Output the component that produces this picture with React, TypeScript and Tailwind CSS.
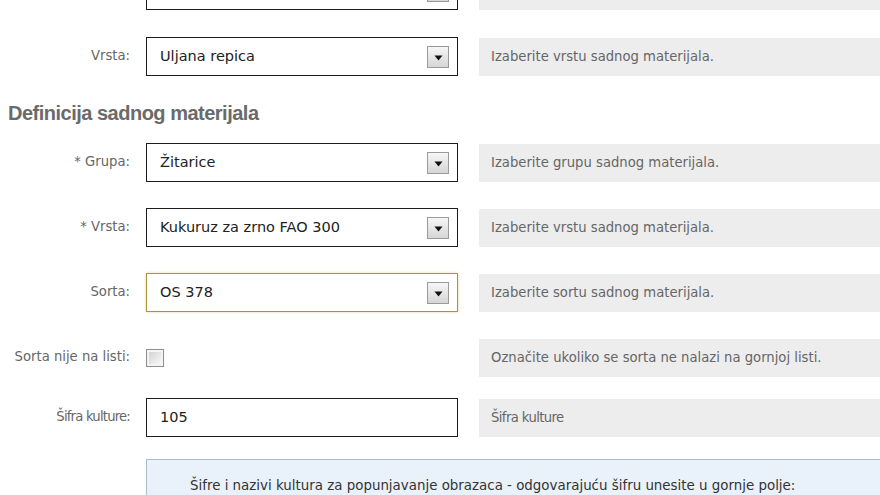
const body = { fontFamily: '"DejaVu Sans", Verdana, sans-serif' };

function Arrow() {
  return (
    <span className="flex h-[22px] w-[22px] items-center justify-center border border-[#9a9a9a] bg-gradient-to-b from-[#f6f6f6] to-[#d6d6d6]">
      <svg width="9" height="6" viewBox="0 0 9 6" className="mt-[2px]">
        <path d="M0.5 0.5 H8.5 L4.5 5.5 Z" fill="#111" />
      </svg>
    </span>
  );
}

function Select({ value, focus }: { value: string; focus?: boolean }) {
  return (
    <div
      className={
        "flex h-[39px] w-[312px] items-center justify-between pl-[13px] pr-[8px] bg-white text-[14.5px] text-[#222] border " +
        (focus ? "border-[#a8973a] shadow-[0_0_3px_#e8dc9a]" : "border-[#1c1c1c]")
      }
    >
      <span className="mt-[1px]">{value}</span>
      <Arrow />
    </div>
  );
}

function Help({ text, tight }: { text: string; tight?: boolean }) {
  return (
    <div
      className={
        "ml-[21px] flex h-[38px] flex-1 items-center bg-[#ededed] pl-[12px] text-[13.2px] text-[#666] " +
        (tight ? "tracking-[-0.6px]" : "")
      }
    >
      {text}
    </div>
  );
}

function Row({
  label,
  children,
  help,
  className,
  tight,
}: {
  label: string;
  children: React.ReactNode;
  help: string;
  className?: string;
  tight?: boolean;
}) {
  return (
    <div className={"flex items-center " + (className ?? "")}>
      <div
        className={
          "w-[130px] shrink-0 text-right text-[13.2px] text-[#666] mb-[2px] " +
          (tight ? "tracking-[-0.8px]" : "")
        }
      >
        {label}
      </div>
      <div className="ml-[16px] shrink-0">{children}</div>
      <Help text={help} tight={tight} />
    </div>
  );
}

export default function App() {
  return (
    <div className="h-[495px] w-[880px] overflow-hidden bg-white" style={body}>
      <div className="-mt-[29px] flex flex-col">
        <Row label="Grupa:" help="Izaberite grupu sadnog materijala.">
          <Select value="Uljarice i proteinsko bilje" />
        </Row>
        <Row label="Vrsta:" help="Izaberite vrstu sadnog materijala." className="mt-[27px]">
          <Select value="Uljana repica" />
        </Row>

        <h2
          className="mt-[25px] ml-[8px] text-[20px] font-bold leading-[24px] tracking-[-0.5px] text-[#6a6a6a]"
          style={{ fontFamily: '"Liberation Sans", Arial, sans-serif' }}
        >
          Definicija sadnog materijala
        </h2>

        <Row label="* Grupa:" help="Izaberite grupu sadnog materijala." className="mt-[18px]">
          <Select value="Žitarice" />
        </Row>
        <Row label="* Vrsta:" help="Izaberite vrstu sadnog materijala." className="mt-[26px]">
          <Select value="Kukuruz za zrno FAO 300" />
        </Row>
        <Row label="Sorta:" help="Izaberite sortu sadnog materijala." className="mt-[26px]">
          <Select value="OS 378" focus />
        </Row>
        <Row label="Sorta nije na listi:" help="Označite ukoliko se sorta ne nalazi na gornjoj listi." className="mt-[26px]">
          <div className="flex h-[39px] w-[312px] items-center">
            <span className="flex h-[18px] w-[18px] items-center justify-center border border-[#8e8e8e] bg-[#f4f4f4]">
              <span className="h-[12px] w-[12px] bg-gradient-to-br from-[#d4d4d4] to-[#f7f7f7]" />
            </span>
          </div>
        </Row>
        <Row label="Šifra kulture:" help="Šifra kulture" className="mt-[21px]" tight>
          <div className="flex h-[39px] w-[312px] items-center border border-[#1c1c1c] bg-white pl-[13px] text-[14.5px] text-[#222]">
            <span className="mt-[1px]">105</span>
          </div>
        </Row>

        <div className="ml-[146px] mt-[22px] h-[80px] border-l border-t border-[#a9bdcc] bg-[#e9f1fa] pl-[43px] pt-[17px] text-[13.4px] leading-[18px] text-[#333]">
          Šifre i nazivi kultura za popunjavanje obrazaca - odgovarajuću šifru unesite u gornje polje:
        </div>
      </div>
    </div>
  );
}
